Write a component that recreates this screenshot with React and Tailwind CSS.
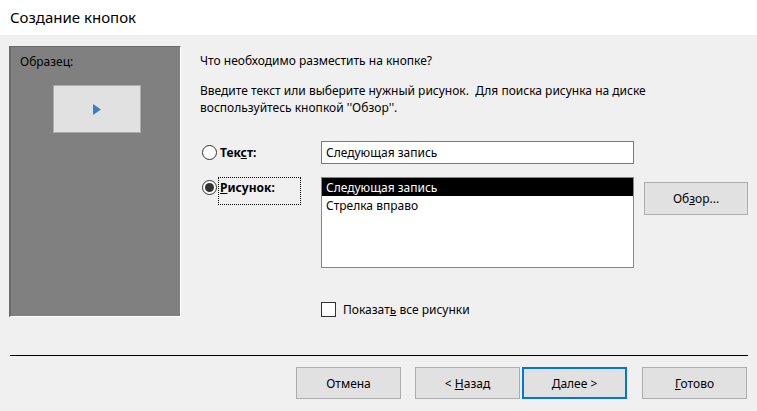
import React from 'react';

const Btn = ({ children, focused, className = '' }) => (
  <button
    className={`h-[32px] w-[105px] bg-[#e1e1e1] text-[12px] text-black ${
      focused ? 'border-2 border-[#0078d7]' : 'border border-[#adadad]'
    } ${className}`}
  >
    {children}
  </button>
);

const Radio = ({ checked }) => (
  <span className="flex h-[15px] w-[15px] items-center justify-center rounded-full border border-[#333] bg-white">
    {checked && <span className="h-[9px] w-[9px] rounded-full bg-[#333]" />}
  </span>
);

export default function App() {
  return (
    <div
      className="h-[411px] w-[757px] overflow-hidden bg-[#f0f0f0] text-[12px] leading-[17px] text-black"
      style={{ fontFamily: '"Noto Sans", "DejaVu Sans", sans-serif' }}
    >
      {/* Title */}
      <div className="flex h-[35px] items-center bg-white pl-[10px] text-[15px]">Создание кнопок</div>

      {/* Body */}
      <div className="flex h-[320px] pl-[9px] pt-[11px]">
        {/* Sample panel */}
        <div className="flex h-[271px] w-[172px] flex-col border-l-2 border-t border-r border-b border-l-[#6a6a6a] border-t-[#6a6a6a] border-r-white border-b-white bg-[#808080]">
          <div className="pl-[9px] pt-[6px]">Образец:</div>
          <div className="ml-[42px] mt-[15px] flex h-[48px] w-[88px] items-center justify-center border border-[#adadad] bg-[#e1e1e1]">
            <svg width="8" height="11" viewBox="0 0 8 11">
              <polygon points="0,0 8,5.5 0,11" fill="#3f7fbf" />
            </svg>
          </div>
        </div>

        {/* Right column */}
        <div className="ml-[19px] flex flex-col">
          <div className="pt-[6px]">Что необходимо разместить на кнопке?</div>
          <div className="mt-[13px] w-[480px]">
            Введите текст или выберите нужный рисунок.&nbsp; Для поиска рисунка на диске
            <br />
            воспользуйтесь кнопкой ''Обзор''.
          </div>

          {/* Text option */}
          <div className="mt-[25px] flex h-[23px] items-center">
            <div className="ml-[2px] flex w-[119px] items-center">
              <Radio />
              <span className="ml-[3px] font-bold">
                Тек<u>с</u>т:
              </span>
            </div>
            <div className="flex h-[23px] w-[313px] items-center border border-[#7a7a7a] bg-white pl-[4px]">
              Следующая запись
            </div>
          </div>

          {/* Picture option */}
          <div className="mt-[13px] flex">
            <div className="ml-[2px] flex w-[119px] items-start">
              <div className="mt-[3px]">
                <Radio checked />
              </div>
              <span className="ml-[1px] flex h-[28px] w-[83px] items-start border border-dotted border-black pl-[1px] font-bold">
                <span className="mt-[1px]">
                  <u>Р</u>исунок:
                </span>
              </span>
            </div>
            <div className="h-[91px] w-[313px] border border-[#828790] bg-white">
              <div className="flex h-[18px] items-center bg-black pl-[4px] text-white">Следующая запись</div>
              <div className="flex h-[19px] items-center pl-[4px]">Стрелка вправо</div>
            </div>
            <button className="ml-[10px] mt-[5px] h-[33px] w-[104px] border border-[#adadad] bg-[#e1e1e1]">
              Об<u>з</u>ор...
            </button>
          </div>

          {/* Checkbox */}
          <div className="ml-[121px] mt-[33px] flex items-center">
            <span className="h-[15px] w-[15px] border border-[#333] bg-white" />
            <span className="ml-[7px]">
              Показат<u>ь</u> все рисунки
            </span>
          </div>
        </div>
      </div>

      {/* Separator */}
      <div className="ml-[10px] h-px w-[738px] bg-black" />

      {/* Buttons */}
      <div className="mt-[11px] flex pl-[296px]">
        <Btn>Отмена</Btn>
        <Btn className="ml-[14px]">
          &lt; <u>Н</u>азад
        </Btn>
        <Btn focused className="ml-[2px]">
          <u>Д</u>алее &gt;
        </Btn>
        <Btn className="ml-[15px]">
          <u>Г</u>отово
        </Btn>
      </div>
    </div>
  );
}
